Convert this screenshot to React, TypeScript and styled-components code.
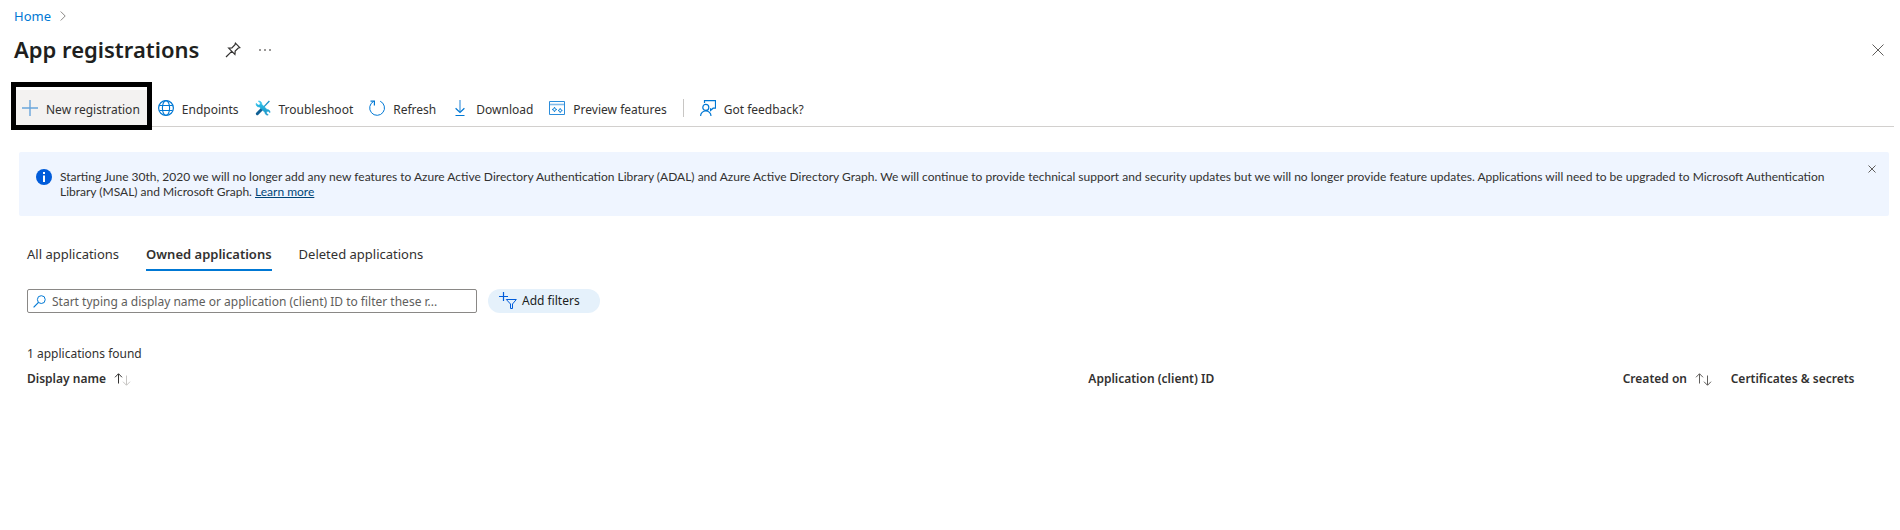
import React from "react";
import styled, { createGlobalStyle, css } from "styled-components";

const ui = '"Noto Sans", "Open Sans", sans-serif';

const GlobalStyle = createGlobalStyle`
  *, *::before, *::after { box-sizing: border-box; }
  body { margin: 0; background: #fff; color: #323130; font: 12px/20px ${ui}; }
  button, input { font: inherit; color: inherit; }
  button { border: 0; margin: 0; padding: 0; background: none; cursor: pointer; }
  svg { display: block; flex: none; }
`;

const Page = styled.main`
  display: flex;
  flex-direction: column;
  padding: 6px 6px 40px 14px;
`;

const Breadcrumb = styled.nav`
  display: flex;
  align-items: center;
  gap: 9px;
  font-size: 13px;
  a { color: #0078d4; text-decoration: none; }
`;

const TitleBar = styled.header`
  display: flex;
  align-items: center;
  height: 48px;
  padding-right: 10px;
`;

const Title = styled.h1`
  margin: 0 26px 2px 0;
  font-size: 22px;
  line-height: 32px;
  font-weight: 600;
  color: #201f1e;
`;

const IconButton = styled.button<{ $push?: boolean }>`
  display: flex;
  align-items: center;
  justify-content: center;
  color: #605e5c;
  & + & { margin-left: 18px; }
  ${(p) => p.$push && css`&& { margin-left: auto; }`}
`;

const Toolbar = styled.div`
  display: flex;
  align-items: center;
  height: 37px;
  margin-top: 16px;
  border-bottom: 1px solid #d2d0ce;
`;

const Command = styled.button<{ $highlighted?: boolean }>`
  position: relative;
  display: flex;
  align-items: center;
  gap: 8px;
  height: 36px;
  padding: 0 8px;
  white-space: nowrap;
  svg { color: #0078d4; }
  ${(p) => p.$highlighted && css`
    padding-right: 10px;
    background: #f3f2f1;
    &::after {
      content: "";
      position: absolute;
      inset: -8px -2px -4px -3px;
      border: 5px solid #000;
    }
  `}
`;

const CommandLabel = styled.span`
  padding-top: 3px;
`;

const Divider = styled.span`
  width: 1px;
  height: 18px;
  margin: 0 8px;
  background: #c8c6c4;
`;

const Notice = styled.section`
  display: flex;
  align-items: flex-start;
  gap: 8px;
  min-height: 64px;
  margin: 25px 5px 0;
  padding: 17px 13px 16px 17px;
  border-radius: 2px;
  background: #eff5ff;
`;

const NoticeText = styled.p`
  flex: 1;
  margin: 0;
  padding-right: 16px;
  font: 12px/15px Lato, sans-serif;
  a { color: #004578; }
`;

const NoticeClose = styled(IconButton)`
  margin-top: -4px;
`;

const Content = styled.div`
  display: flex;
  flex-direction: column;
  padding: 0 5px 0 13px;
`;

const Tabs = styled.div`
  display: flex;
  gap: 27px;
  margin-top: 25px;
`;

const Tab = styled.button`
  height: 30px;
  padding: 3px 0 5px;
  border-bottom: 2px solid transparent;
  font-size: 13px;
  line-height: 20px;
  &[aria-selected="true"] {
    border-color: #0078d4;
    font-weight: 600;
  }
`;

const Filters = styled.div`
  display: flex;
  align-items: center;
  gap: 11px;
  margin-top: 18px;
`;

const SearchBox = styled.label`
  display: flex;
  align-items: center;
  gap: 6px;
  width: 450px;
  height: 24px;
  padding: 0 5px;
  border: 1px solid #8a8886;
  border-radius: 2px;
  svg { color: #0078d4; }
`;

const SearchInput = styled.input`
  flex: 1;
  min-width: 0;
  height: 20px;
  padding: 1px 0 0;
  border: 0;
  outline: 0;
  background: none;
  &::placeholder { color: #605e5c; opacity: 1; }
`;

const Pill = styled.button`
  display: flex;
  align-items: center;
  gap: 5px;
  height: 24px;
  padding: 0 20px 0 11px;
  border-radius: 12px;
  background: #e5f1fb;
  color: #201f1e;
  svg { color: #015cda; }
`;

const Count = styled.p`
  margin: 31px 0 5px;
`;

const Table = styled.table`
  width: 100%;
  table-layout: fixed;
  border-collapse: collapse;
`;

const Column = styled.th<{ $width?: string }>`
  width: ${(p) => p.$width ?? "auto"};
  padding: 0;
  text-align: left;
  font-weight: 600;
  white-space: nowrap;
`;

const SortButton = styled.button`
  display: flex;
  align-items: center;
  gap: 8px;
  font-weight: 600;
`;

type IconProps = { w?: number; h?: number; children: React.ReactNode };
const Icon = ({ w = 16, h = 16, children }: IconProps) => (
  <svg width={w} height={h} viewBox={`0 0 ${w} ${h}`} fill="none" stroke="currentColor" aria-hidden="true">
    {children}
  </svg>
);

const Chevron = () => (
  <Icon w={6} h={10}><path d="M.7.5 5.2 5 .7 9.5" stroke="#8a8886" /></Icon>
);
const Pin = () => (
  <Icon>
    <path d="M10.4 1.2 14.8 5.6 13.3 6 10.2 9.1 9.9 12.4 3.6 6.1 6.9 5.8 10 2.7ZM6.7 9.3 1 15" stroke="#323130" strokeWidth="1.2" />
  </Icon>
);
const Dots = () => (
  <Icon w={12} h={2}>
    <path d="M0 1h2M5 1h2M10 1h2" stroke="#797775" strokeWidth="1.5" />
  </Icon>
);
const Cross = ({ size }: { size: number }) => (
  <Icon w={size} h={size}>
    <path d={`M.5.5 ${size - 0.5} ${size - 0.5}M${size - 0.5}.5.5 ${size - 0.5}`} />
  </Icon>
);
const Plus = () => (
  <Icon><path d="M8 0v16M0 8h16" stroke="#69a6dc" strokeWidth="1.4" /></Icon>
);
const Globe = () => (
  <Icon>
    <circle cx="8" cy="8" r="7.4" strokeWidth="1.2" />
    <ellipse cx="8" cy="8" rx="3.6" ry="7.4" strokeWidth="1.1" />
    <path d="M1.4 5.5h13.2M1.4 10.5h13.2" />
  </Icon>
);
const Tools = () => (
  <Icon>
    <defs>
      <linearGradient id="wrench" x1="0" y1="0" x2="0" y2="1">
        <stop offset="0" stopColor="#32c8f0" />
        <stop offset="1" stopColor="#1490c4" />
      </linearGradient>
    </defs>
    <path d="M14.4 1 7.4 8.4" stroke="#1b93c9" strokeWidth="1.3" />
    <path d="M7.2 8.8 2.3 13.7" stroke="#0f5f94" strokeWidth="3" strokeLinecap="round" />
    <path
      d="M3.2 1.1 5.3 3 4.9 4.7 3.2 5.1 1.2 3.2C.6 5 1.8 7.2 4.4 7L10 12.6C9.9 14.4 11.6 15.6 13.3 15L11.4 13.1 11.8 11.6 13.3 11.2 15 12.8C15.5 11 14 9.4 12 9.5L6.8 4.3C7 2.2 5.2.5 3.2 1.1Z"
      fill="url(#wrench)" stroke="url(#wrench)" strokeWidth=".5"
    />
  </Icon>
);
const Refresh = () => (
  <Icon>
    <path d="M11.2 1.2A7.4 7.4 0 1 1 4.6 1.4" />
    <path d="M1.5 1.2h3.9v4.2" strokeWidth="1.2" />
  </Icon>
);
const Download = () => (
  <Icon>
    <path d="M8 0v12" stroke="#5ea6e2" strokeWidth="1.4" />
    <path d="M3.6 8.2 8 12.4 12.4 8.2M3.5 15.5h9" strokeWidth="1.2" />
  </Icon>
);
const Preview = () => (
  <Icon>
    <path d="M1 4.5h14" stroke="#83bbe9" strokeWidth="1.6" />
    <path d="M.5 1.5h15v13H.5z" stroke="#2b8ddb" />
    <path d="M5.5 7.2 6.2 8.8 7.8 9.5 6.2 10.2 5.5 11.8 4.8 10.2 3.2 9.5 4.8 8.8ZM11.2 8.4l.7 1.4 1.4.7-1.4.7-.7 1.4-.7-1.4-1.4-.7 1.4-.7Z" strokeWidth=".9" />
  </Icon>
);
const Feedback = () => (
  <Icon>
    <circle cx="5.8" cy="7.4" r="3" strokeWidth="1.2" />
    <path d="M.6 16A5.2 5.2 0 0 1 11 16M4.5 3V.6h11v7.6h-2.4l-2.5 2.3V8.2" strokeWidth="1.2" />
  </Icon>
);
const Info = () => (
  <Icon>
    <circle cx="8" cy="8" r="8" fill="#015cda" stroke="none" />
    <path d="M8 3v2M8 6.4V13" stroke="#fff" strokeWidth="2" />
  </Icon>
);
const Search = () => (
  <Icon w={13} h={13}>
    <circle cx="8.3" cy="4.6" r="3.9" />
    <path d="M5.5 7.4.6 12.3" strokeWidth="1.2" />
  </Icon>
);
const FilterAdd = () => (
  <Icon w={18} h={18}>
    <path d="M4.5 0v9M0 4.5h9" strokeWidth="1.2" />
    <path d="M7.3 7.5h10L13.5 12v4.5h-2V12Z" />
  </Icon>
);
const SortArrows = ({ ascending }: { ascending?: boolean }) => (
  <Icon w={17} h={14}>
    <path d="M4.5 11.5V2M1 5.3 4.5 1.7 8 5.3" stroke={ascending ? "#323130" : "#605e5c"} />
    <path d="M12.5 3.5V13M9 9.7l3.5 3.6L16 9.7" stroke={ascending ? "#c8c6c4" : "#605e5c"} />
  </Icon>
);

const commands = [
  { label: "New registration", icon: <Plus />, highlighted: true },
  { label: "Endpoints", icon: <Globe /> },
  { label: "Troubleshoot", icon: <Tools /> },
  { label: "Refresh", icon: <Refresh /> },
  { label: "Download", icon: <Download /> },
  { label: "Preview features", icon: <Preview /> },
];

const tabs = ["All applications", "Owned applications", "Deleted applications"];

export default function App() {
  const [active, setActive] = React.useState(tabs[1]);
  return (
    <>
      <GlobalStyle />
      <Page>
        <Breadcrumb aria-label="Breadcrumb">
          <a href="#home">Home</a>
          <Chevron />
        </Breadcrumb>
        <TitleBar>
          <Title>App registrations</Title>
          <IconButton aria-label="Pin"><Pin /></IconButton>
          <IconButton aria-label="More"><Dots /></IconButton>
          <IconButton aria-label="Close" $push><Cross size={12} /></IconButton>
        </TitleBar>
        <Toolbar role="toolbar">
          {commands.map((c) => (
            <Command key={c.label} $highlighted={c.highlighted}>
              {c.icon}
              <CommandLabel>{c.label}</CommandLabel>
            </Command>
          ))}
          <Divider />
          <Command><Feedback /><CommandLabel>Got feedback?</CommandLabel></Command>
        </Toolbar>
        <Notice>
          <Info />
          <NoticeText>
            Starting June 30th, 2020 we will no longer add any new features to Azure Active Directory Authentication
            Library (ADAL) and Azure Active Directory Graph. We will continue to provide technical support and security
            updates but we will no longer provide feature updates. Applications will need to be upgraded to Microsoft
            Authentication Library (MSAL) and Microsoft Graph. <a href="#learn-more">Learn more</a>
          </NoticeText>
          <NoticeClose aria-label="Dismiss"><Cross size={8} /></NoticeClose>
        </Notice>
        <Content>
          <Tabs role="tablist">
            {tabs.map((t) => (
              <Tab key={t} role="tab" aria-selected={t === active} onClick={() => setActive(t)}>{t}</Tab>
            ))}
          </Tabs>
          <Filters>
            <SearchBox>
              <Search />
              <SearchInput
                type="text"
                aria-label="Filter applications"
                placeholder="Start typing a display name or application (client) ID to filter these r..."
              />
            </SearchBox>
            <Pill><FilterAdd />Add filters</Pill>
          </Filters>
          <Count>1 applications found</Count>
          <Table>
            <thead>
              <tr>
                <Column $width="57%"><SortButton>Display name<SortArrows ascending /></SortButton></Column>
                <Column $width="28.7%">Application (client) ID</Column>
                <Column $width="5.8%"><SortButton>Created on<SortArrows /></SortButton></Column>
                <Column>Certificates &amp; secrets</Column>
              </tr>
            </thead>
          </Table>
        </Content>
      </Page>
    </>
  );
}
